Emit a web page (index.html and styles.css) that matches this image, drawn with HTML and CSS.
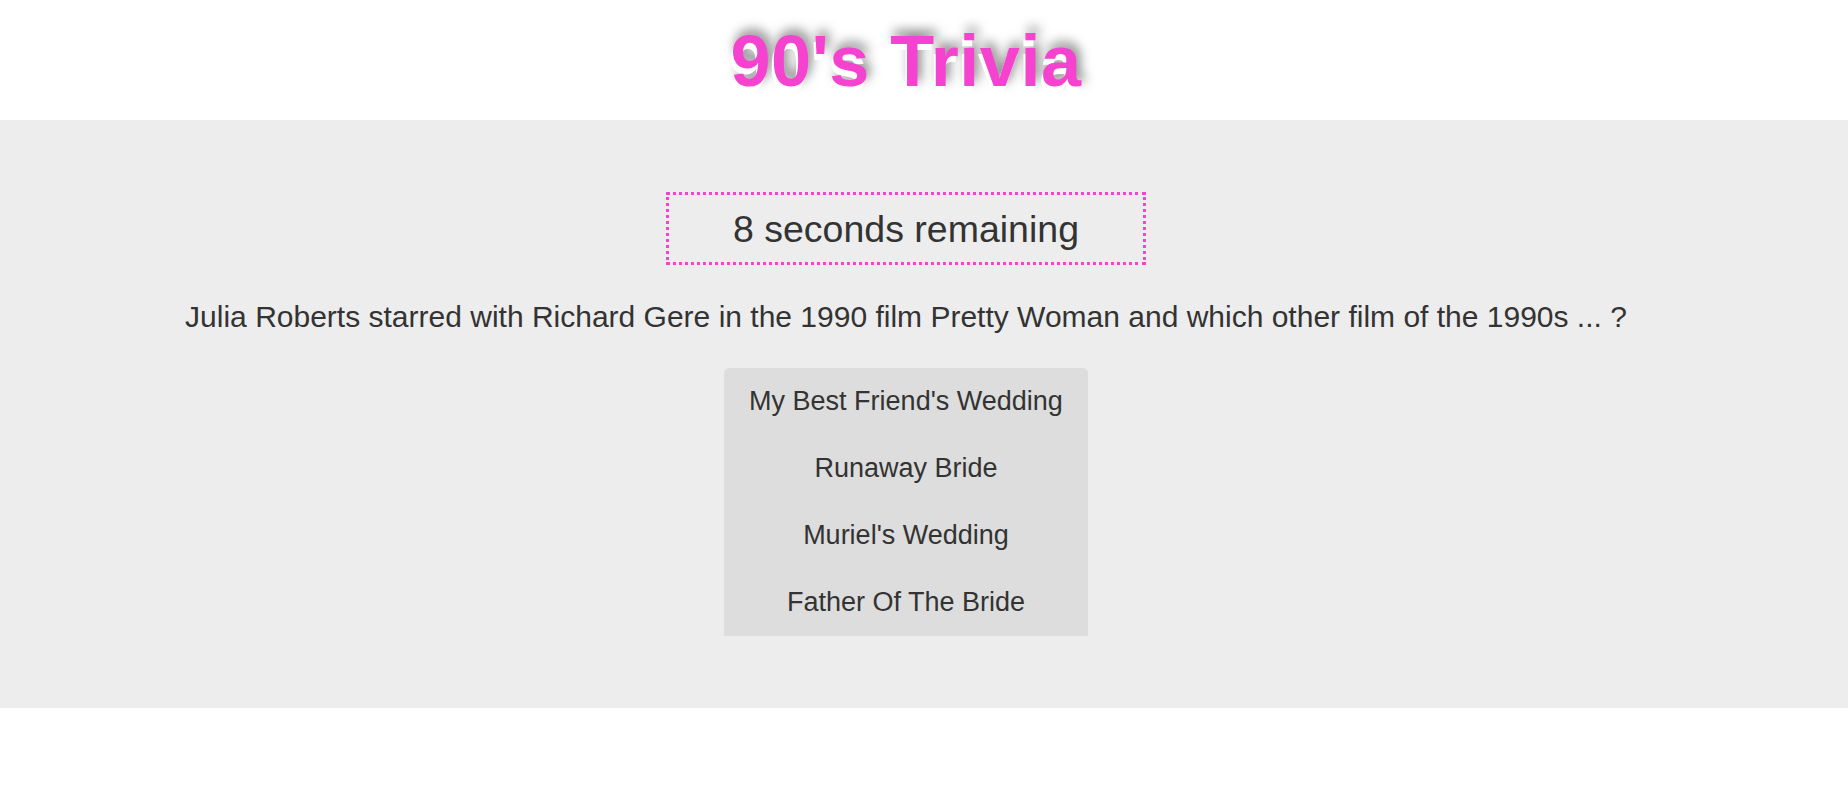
FILE: index.html
```html
<!DOCTYPE html>
<html>
<head>
<meta charset="utf-8">
<title>90's Trivia</title>
<link rel="stylesheet" href="styles.css">
</head>
<body>
<header class="header">
  <h1 class="title">90's Trivia</h1>
</header>
<main class="game">
  <div class="game-inner">
    <div class="timer">8 seconds remaining</div>
    <p class="question">Julia Roberts starred with Richard Gere in the 1990 film Pretty Woman and which other film of the 1990s ... ?</p>
    <ul class="answers">
      <li class="answer">My Best Friend's Wedding</li>
      <li class="answer">Runaway Bride</li>
      <li class="answer">Muriel's Wedding</li>
      <li class="answer">Father Of The Bride</li>
    </ul>
  </div>
</main>
</body>
</html>
```
FILE: styles.css
```css
html, body {
  margin: 0;
  padding: 0;
  background: #fff;
  font-family: "Liberation Sans", Arial, sans-serif;
  color: #333;
}

.header {
  padding: 3px 36px 0 0;
  text-align: center;
}

.title {
  margin: 0;
  font-size: 72px;
  letter-spacing: 0.5px;
  line-height: 117px;
  font-weight: bold;
  color: #f542cf;
  text-shadow: -2px 6px 0 #fff, 3px -5px 12px #777;
}

.game {
  background: #ededed;
  padding: 72px 36px 72px 0;
}

.game-inner {
  display: flex;
  flex-direction: column;
  align-items: center;
}

.timer {
  box-sizing: border-box;
  width: 480px;
  padding: 14px 0 12px;
  border: 3px dotted #f542cf;
  font-size: 37.5px;
  line-height: 41px;
  text-align: center;
}

.question {
  margin: 35px 0 34px;
  font-size: 30px;
  line-height: 34px;
  text-align: center;
}

.answers {
  list-style: none;
  margin: 0;
  padding: 0;
  width: 364px;
  background: #dddddd;
  border-radius: 5px 5px 0 0;
}

.answer {
  height: 67px;
  display: flex;
  align-items: center;
  justify-content: center;
  font-size: 27px;
}
```
